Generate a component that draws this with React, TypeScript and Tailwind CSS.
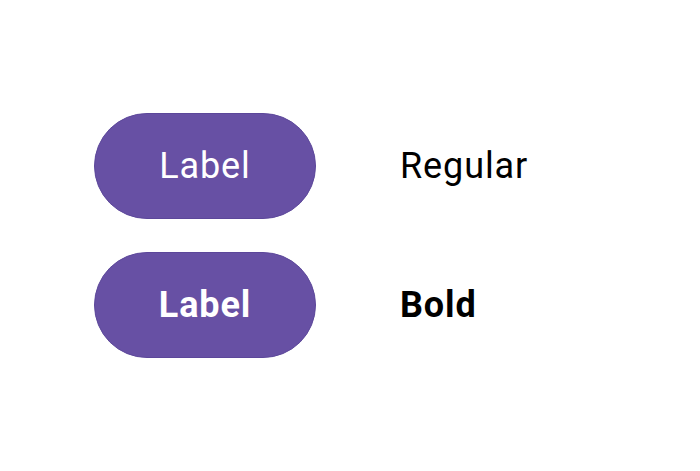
export default function App() {
  const pill =
    "w-[222px] h-[106px] rounded-full bg-[#6750A4] border border-[#5c479a] flex items-center justify-center text-white text-[36px] tracking-[0.9px] leading-none";
  return (
    <div
      className="w-[700px] h-[471px] bg-white flex flex-col justify-center pl-[94px] gap-[33px]"
      style={{ fontFamily: "Roboto, sans-serif" }}
    >
      <div className="flex items-center gap-[84px]">
        <div className={pill + " font-normal"}>Label</div>
        <div className="text-[36px] tracking-[0.9px] leading-none text-black font-normal">Regular</div>
      </div>
      <div className="flex items-center gap-[84px]">
        <div className={pill + " font-bold"}>Label</div>
        <div className="text-[36px] tracking-[0.9px] leading-none text-black font-bold">Bold</div>
      </div>
    </div>
  );
}
